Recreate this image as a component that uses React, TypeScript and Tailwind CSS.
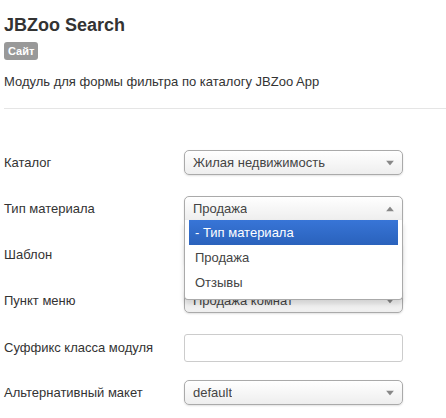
import React from "react";

const Arrow = ({ up = false }: { up?: boolean }) => (
  <svg width="8" height="5" viewBox="0 0 8 5" className="absolute right-[8px] top-1/2 -translate-y-1/2">
    {up ? <path d="M0 5 L4 0 L8 5 Z" fill="#888" /> : <path d="M0 0 L8 0 L4 5 Z" fill="#888" />}
  </svg>
);

const Select = ({ value, open = false }: { value: string; open?: boolean }) => (
  <div
    className={`relative w-[219px] h-[25px] border border-[#aaa] bg-gradient-to-b from-white to-[#eeeeee] shadow-[0_1px_2px_rgba(0,0,0,0.12)] flex items-center pl-[8px] text-[13px] text-[#444] ${
      open ? "rounded-t-[5px]" : "rounded-[5px]"
    }`}
  >
    <span className="truncate">{value}</span>
    <Arrow up={open} />
  </div>
);

const Row = ({ label, children }: { label: string; children: React.ReactNode }) => (
  <div className="flex h-[46px]">
    <div className="w-[180px] text-[13px] text-[#333] h-[25px] flex items-center">{label}</div>
    <div className="relative">{children}</div>
  </div>
);

export default function App() {
  return (
    <div className="w-[446px] h-[418px] bg-white overflow-hidden pl-[4px] font-['Liberation_Sans',Arial,sans-serif] text-[#333]">
      <h1 className="pt-[14px] text-[18px] font-bold leading-[22px] text-[#333]">JBZoo Search</h1>
      <div className="mt-[6px] inline-block bg-[#999] text-white text-[11px] font-bold leading-[18px] px-[4px] rounded-[3px]">
        Сайт
      </div>
      <p className="mt-[11px] text-[13px] leading-[18px] text-[#333]">Модуль для формы фильтра по каталогу JBZoo App</p>
      <div className="mt-[17px] h-px bg-[#e5e5e5]" />
      <div className="pt-[41px]">
        <Row label="Каталог">
          <Select value="Жилая недвижимость" />
        </Row>
        <Row label="Тип материала">
          <Select value="Продажа" open />
          <div className="absolute left-0 top-[24px] z-10 w-[219px] bg-white border border-[#aaa] border-t-0 rounded-b-[4px] shadow-[0_4px_5px_rgba(0,0,0,0.15)] px-[4px] pb-[4px] text-[13px]">
            <div className="h-[25px] flex items-center pl-[6px] text-white bg-gradient-to-b from-[#3875d7] to-[#2a62bc]">
              - Тип материала
            </div>
            <div className="h-[25px] flex items-center pl-[6px] text-[#444]">Продажа</div>
            <div className="h-[25px] flex items-center pl-[6px] text-[#444]">Отзывы</div>
          </div>
        </Row>
        <Row label="Шаблон">
          <Select value="" />
        </Row>
        <Row label="Пункт меню">
          <Select value="Продажа комнат" />
        </Row>
        <div className="flex h-[46px]">
          <div className="w-[180px] text-[13px] text-[#333] h-[28px] flex items-center">Суффикс класса модуля</div>
          <div className="w-[219px] h-[28px] border border-[#ccc] rounded-[3px] bg-white" />
        </div>
        <Row label="Альтернативный макет">
          <Select value="default" />
        </Row>
      </div>
    </div>
  );
}
